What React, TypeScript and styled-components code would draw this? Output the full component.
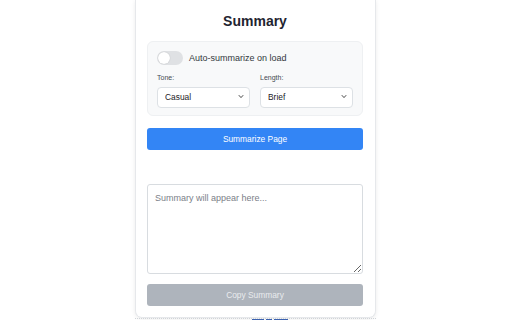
import React, { useState } from "react";
import styled, { createGlobalStyle } from "styled-components";

const GlobalStyle = createGlobalStyle`
  html, body {
    margin: 0;
    padding: 0;
    background: #ffffff;
    font-family: "Liberation Sans", Arial, sans-serif;
  }
  #root {
    width: 512px;
    height: 320px;
    overflow: hidden;
  }
`;

const Page = styled.div`
  width: 512px;
  height: 320px;
  display: flex;
  flex-direction: column;
  padding-left: 135px;
  box-sizing: border-box;
`;

const Panel = styled.div`
  width: 241px;
  height: 318px;
  box-sizing: border-box;
  background: #ffffff;
  border: 1px solid #e6e8eb;
  border-top: none;
  border-radius: 0 0 7px 7px;
  box-shadow: 0 1px 4px rgba(0, 0, 0, 0.08);
  padding: 13px 12px 0 11px;
  display: flex;
  flex-direction: column;
`;

const Title = styled.h1`
  margin: 0;
  font-size: 14px;
  line-height: 16px;
  font-weight: 700;
  color: #1f2430;
  text-align: center;
`;

const Settings = styled.div`
  margin-top: 12px;
  height: 75px;
  box-sizing: border-box;
  background: #f8f9fa;
  border: 1px solid #eef0f2;
  border-radius: 6px;
  padding: 9px 9px 0 9px;
  display: flex;
  flex-direction: column;
`;

const ToggleRow = styled.label`
  display: flex;
  align-items: center;
  gap: 6px;
  height: 14px;
  font-size: 9px;
  color: #333840;
  cursor: pointer;
`;

const Track = styled.span<{ $on: boolean }>`
  position: relative;
  width: 26px;
  height: 14px;
  border-radius: 7px;
  background: ${(p) => (p.$on ? "#3b86f6" : "#dfe1e4")};
  flex-shrink: 0;
`;

const Knob = styled.span<{ $on: boolean }>`
  position: absolute;
  top: 1px;
  left: ${(p) => (p.$on ? "13px" : "1px")};
  width: 12px;
  height: 12px;
  border-radius: 50%;
  background: #ffffff;
  box-shadow: 0 0 1px rgba(0, 0, 0, 0.25);
`;

const Fields = styled.div`
  margin-top: 9px;
  display: grid;
  grid-template-columns: 1fr 1fr;
  gap: 10px;
`;

const Field = styled.div`
  display: flex;
  flex-direction: column;
  gap: 4px;
`;

const FieldLabel = styled.span`
  font-size: 7px;
  line-height: 8px;
  color: #444a52;
`;

const SelectWrap = styled.div`
  position: relative;
`;

const Select = styled.select`
  appearance: none;
  width: 100%;
  height: 21px;
  box-sizing: border-box;
  border: 1px solid #dde1e5;
  border-radius: 4px;
  background: #ffffff;
  padding: 0 0 0 7px;
  font-family: "Liberation Sans", Arial, sans-serif;
  font-size: 8.4px;
  color: #1d2127;
  outline: none;
`;

const Chevron = styled.svg`
  position: absolute;
  right: 6px;
  top: 8px;
  width: 6px;
  height: 5px;
  pointer-events: none;
`;

const Button = styled.button<{ $variant: "primary" | "muted" }>`
  width: 100%;
  height: 22px;
  border: none;
  border-radius: 3px;
  font-family: "Liberation Sans", Arial, sans-serif;
  font-size: 8.4px;
  background: ${(p) => (p.$variant === "primary" ? "#3385f5" : "#aeb4bc")};
  color: ${(p) => (p.$variant === "primary" ? "#ffffff" : "#e9ebee")};
  cursor: ${(p) => (p.$variant === "primary" ? "pointer" : "default")};
`;

const PrimaryButton = styled(Button)`
  margin-top: 12px;
`;

const CopyButton = styled(Button)`
  margin-top: 10px;
`;

const Output = styled.textarea`
  margin-top: 34px;
  width: 100%;
  height: 90px;
  box-sizing: border-box;
  border: 1px solid #d8dce0;
  border-radius: 3px;
  padding: 7px 7px;
  font-family: "Liberation Sans", Arial, sans-serif;
  font-size: 9px;
  line-height: 12px;
  color: #333;
  resize: vertical;
  outline: none;

  &::placeholder {
    color: #7b8088;
  }
`;

const Backdrop = styled.div`
  height: 2px;
  width: 241px;
  display: flex;
  gap: 2px;
  padding-left: 117px;
  box-sizing: border-box;
  border-top: 1px dotted #d0d4d8;
`;

const Block = styled.span<{ $w: number }>`
  width: ${(p) => p.$w}px;
  height: 2px;
  background: #3d63b0;
`;

function SelectField({ label, options }: { label: string; options: string[] }) {
  return (
    <Field>
      <FieldLabel>{label}</FieldLabel>
      <SelectWrap>
        <Select defaultValue={options[0]}>
          {options.map((o) => (
            <option key={o}>{o}</option>
          ))}
        </Select>
        <Chevron viewBox="0 0 6 5">
          <path d="M0.8 1.2 L3 3.6 L5.2 1.2" fill="none" stroke="#333" strokeWidth="0.9" />
        </Chevron>
      </SelectWrap>
    </Field>
  );
}

export default function App() {
  const [auto, setAuto] = useState(false);

  return (
    <>
      <GlobalStyle />
      <Page>
        <Panel>
          <Title>Summary</Title>
          <Settings>
            <ToggleRow onClick={() => setAuto(!auto)}>
              <Track $on={auto}>
                <Knob $on={auto} />
              </Track>
              Auto-summarize on load
            </ToggleRow>
            <Fields>
              <SelectField label="Tone:" options={["Casual", "Formal", "Neutral"]} />
              <SelectField label="Length:" options={["Brief", "Medium", "Detailed"]} />
            </Fields>
          </Settings>
          <PrimaryButton $variant="primary">Summarize Page</PrimaryButton>
          <Output placeholder="Summary will appear here..." readOnly />
          <CopyButton $variant="muted" disabled>
            Copy Summary
          </CopyButton>
        </Panel>
        <Backdrop>
          <Block $w={12} />
          <Block $w={6} />
          <Block $w={14} />
        </Backdrop>
      </Page>
    </>
  );
}
